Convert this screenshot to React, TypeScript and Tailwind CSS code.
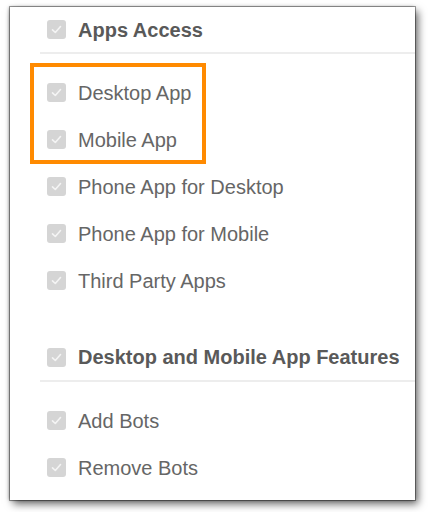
const Check = () => (
  <span className="flex h-[19px] w-[19px] shrink-0 items-center justify-center rounded-[3px] bg-[#d5d5d5]">
    <svg width="13" height="13" viewBox="0 0 13 13" fill="none">
      <polyline points="2.5,6.8 5.3,9.5 10.5,3.5" stroke="#f4f4f4" strokeWidth="1.6" strokeLinecap="round" strokeLinejoin="round" />
    </svg>
  </span>
);

const Row = ({ label }: { label: string }) => (
  <div className="flex h-[47px] items-center gap-[12px] pl-[37px]">
    <Check />
    <span className="text-[20px] text-[#666666]">{label}</span>
  </div>
);

const Heading = ({ label, h }: { label: string; h: string }) => (
  <div className={`flex items-center gap-[12px] pl-[37px] ${h}`}>
    <Check />
    <span className="text-[20px] font-bold text-[#595959]">{label}</span>
  </div>
);

export default function App() {
  return (
    <div className="h-[512px] w-[428px] bg-white pl-[10px] pt-[7px]" style={{ fontFamily: '"Liberation Sans", Arial, sans-serif' }}>
      <div className="relative flex h-[493px] w-[405px] flex-col bg-white shadow-[0_0_0_1px_rgba(0,0,0,0.35),-1px_0_3px_rgba(0,0,0,0.35),3px_4px_8px_rgba(0,0,0,0.6)]">
        <Heading label="Apps Access" h="h-[45px]" />
        <div className="ml-[30px] h-[2px] bg-[#ededed]" />
        <div className="pt-[15px]">
          <Row label="Desktop App" />
          <Row label="Mobile App" />
          <Row label="Phone App for Desktop" />
          <Row label="Phone App for Mobile" />
          <Row label="Third Party Apps" />
        </div>
        <div className="mt-[30px]">
          <Heading label="Desktop and Mobile App Features" h="h-[46px]" />
        </div>
        <div className="ml-[30px] h-[2px] bg-[#ededed]" />
        <div className="pt-[15px]">
          <Row label="Add Bots" />
          <Row label="Remove Bots" />
        </div>
        <div className="absolute left-[20px] top-[56px] h-[101px] w-[176px] border-4 border-[#ff8a00]" />
      </div>
    </div>
  );
}
